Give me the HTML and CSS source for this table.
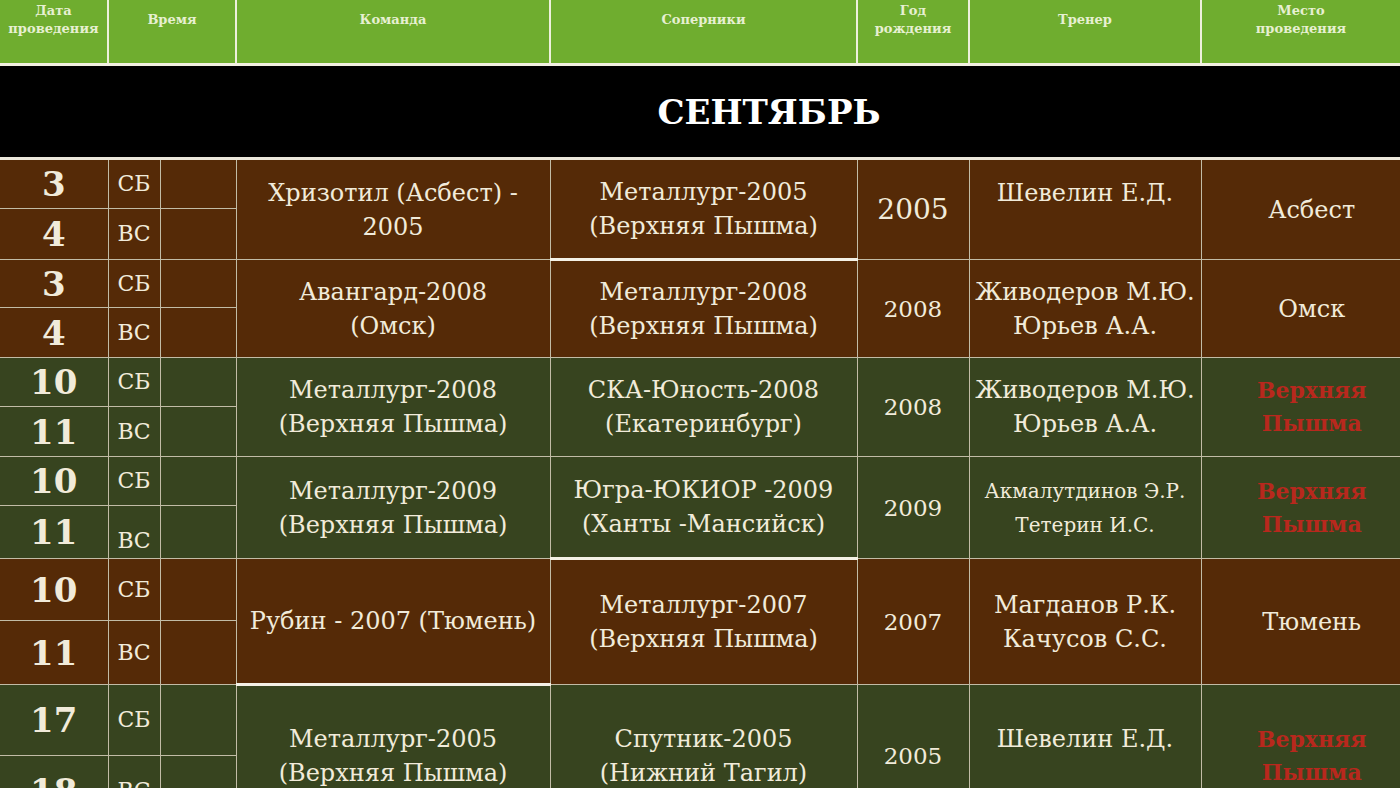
FILE: index.html
```html
<!DOCTYPE html>
<html lang="ru">
<head>
<meta charset="utf-8">
<title>Расписание</title>
<link rel="stylesheet" href="styles.css">
</head>
<body>
<table class="sched">
  <colgroup>
    <col class="c-date"><col class="c-day"><col class="c-time"><col class="c-team"><col class="c-opp"><col class="c-year"><col class="c-coach"><col class="c-place">
  </colgroup>
  <thead>
    <tr class="hdr">
      <th>Дата<br>проведения</th>
      <th colspan="2">Время</th>
      <th>Команда</th>
      <th>Соперники</th>
      <th>Год<br>рождения</th>
      <th>Тренер</th>
      <th>Место<br>проведения</th>
    </tr>
  </thead>
  <tbody>
    <tr class="month"><td colspan="8">СЕНТЯБРЬ</td></tr>

    <tr class="brown r1a">
      <td class="date">3</td><td class="day">СБ</td><td class="time"></td>
      <td class="team" rowspan="2">Хризотил (Асбест) -<br>2005</td>
      <td class="opp thick-b" rowspan="2">Металлург-2005<br>(Верхняя Пышма)</td>
      <td class="year big" rowspan="2">2005</td>
      <td class="coach" rowspan="2">Шевелин Е.Д.<br>&nbsp;</td>
      <td class="place" rowspan="2">Асбест</td>
    </tr>
    <tr class="brown r1b">
      <td class="date">4</td><td class="day">ВС</td><td class="time"></td>
    </tr>

    <tr class="brown r2a">
      <td class="date">3</td><td class="day">СБ</td><td class="time"></td>
      <td class="team" rowspan="2">Авангард-2008<br>(Омск)</td>
      <td class="opp" rowspan="2">Металлург-2008<br>(Верхняя Пышма)</td>
      <td class="year" rowspan="2">2008</td>
      <td class="coach" rowspan="2">Живодеров М.Ю.<br>Юрьев А.А.</td>
      <td class="place" rowspan="2">Омск</td>
    </tr>
    <tr class="brown r2b">
      <td class="date">4</td><td class="day">ВС</td><td class="time"></td>
    </tr>

    <tr class="green r3a">
      <td class="date">10</td><td class="day">СБ</td><td class="time"></td>
      <td class="team" rowspan="2">Металлург-2008<br>(Верхняя Пышма)</td>
      <td class="opp" rowspan="2">СКА-Юность-2008<br>(Екатеринбург)</td>
      <td class="year" rowspan="2">2008</td>
      <td class="coach" rowspan="2">Живодеров М.Ю.<br>Юрьев А.А.</td>
      <td class="place red" rowspan="2">Верхняя<br>Пышма</td>
    </tr>
    <tr class="green r3b">
      <td class="date">11</td><td class="day">ВС</td><td class="time"></td>
    </tr>

    <tr class="green r4a">
      <td class="date">10</td><td class="day">СБ</td><td class="time"></td>
      <td class="team" rowspan="2">Металлург-2009<br>(Верхняя Пышма)</td>
      <td class="opp thick-b" rowspan="2">Югра-ЮКИОР -2009<br>(Ханты -Мансийск)</td>
      <td class="year" rowspan="2">2009</td>
      <td class="coach small" rowspan="2">Акмалутдинов Э.Р.<br>Тетерин И.С.</td>
      <td class="place red" rowspan="2">Верхняя<br>Пышма</td>
    </tr>
    <tr class="green r4b">
      <td class="date">11</td><td class="day low">ВС</td><td class="time"></td>
    </tr>

    <tr class="brown r5a">
      <td class="date">10</td><td class="day">СБ</td><td class="time"></td>
      <td class="team thick-b" rowspan="2">Рубин - 2007 (Тюмень)</td>
      <td class="opp" rowspan="2">Металлург-2007<br>(Верхняя Пышма)</td>
      <td class="year" rowspan="2">2007</td>
      <td class="coach" rowspan="2">Магданов Р.К.<br>Качусов С.С.</td>
      <td class="place" rowspan="2">Тюмень</td>
    </tr>
    <tr class="brown r5b">
      <td class="date">11</td><td class="day">ВС</td><td class="time"></td>
    </tr>

    <tr class="green r6a">
      <td class="date">17</td><td class="day">СБ</td><td class="time"></td>
      <td class="team" rowspan="2">Металлург-2005<br>(Верхняя Пышма)</td>
      <td class="opp" rowspan="2">Спутник-2005<br>(Нижний Тагил)</td>
      <td class="year" rowspan="2">2005</td>
      <td class="coach" rowspan="2">Шевелин Е.Д.<br>&nbsp;</td>
      <td class="place red" rowspan="2">Верхняя<br>Пышма</td>
    </tr>
    <tr class="green r6b">
      <td class="date">18</td><td class="day">ВС</td><td class="time"></td>
    </tr>
  </tbody>
</table>
</body>
</html>
```

FILE: styles.css
```css
html, body {
  margin: 0;
  padding: 0;
  background: #000;
  overflow: hidden;
}
body {
  width: 1400px;
  height: 788px;
  font-family: "DejaVu Serif", "Liberation Serif", serif;
}
.sched {
  width: 1400px;
  table-layout: fixed;
  border-collapse: collapse;
  color: #f1ebda;
}
.c-date { width: 108px; }
.c-day { width: 52px; }
.c-time { width: 76px; }
.c-team { width: 314px; }
.c-opp { width: 307px; }
.c-year { width: 112px; }
.c-coach { width: 232px; }
.c-place { width: 199px; }

.sched th, .sched td {
  padding: 0;
  text-align: center;
  vertical-align: middle;
  overflow: hidden;
  white-space: nowrap;
}

/* header */
.hdr th {
  height: 64px;
  background: #6fad2f;
  color: #e7f0d2;
  font-size: 13px;
  font-weight: bold;
  line-height: 18px;
  vertical-align: middle;
  padding: 2px 0 25px;
  border-left: 2px solid #eef0dc;
  border-right: 2px solid #eef0dc;
  border-bottom: 3px solid #f3f1e2;
  box-sizing: border-box;
}
.hdr th:first-child { border-left: 0; }
.hdr th:last-child { border-right: 0; }

/* month */
.month td {
  height: 91px;
  background: #000;
  color: #fff;
  font-size: 34px;
  font-weight: bold;
  padding-left: 138px;
  border-bottom: 3px solid #ece8dc;
}

/* body cells */
.brown td { background: #552a07; }
.green td { background: #37441f; }
tbody tr:not(.month) td {
  border: 1px solid #c2bca6;
  font-size: 24px;
  line-height: 34px;
}
.sched td:first-child { border-left: 0; }
.sched td.place { border-right: 0; padding-left: 22px; }

.sched td.date {
  font-size: 34px;
  font-weight: bold;
  line-height: 34px;
}
.sched td.day { font-size: 22px; }
.sched td.day.low { vertical-align: bottom; padding-bottom: 0; }
.sched td.year { font-size: 23px; }
.sched td.year.big { font-size: 28px; }
.sched td.coach.small { font-size: 20px; }
.sched td.red {
  color: #b8281d;
  font-weight: bold;
  font-size: 22px;
  line-height: 33px;
}
.sched td.thick-b { border-bottom: 3px solid #f4f1e6; }

.r1a { height: 50px; }
.r1b { height: 51px; }
.r2a { height: 48px; }
.r2b { height: 50px; }
.r3a { height: 49px; }
.r3b { height: 50px; }
.r4a { height: 49px; }
.r4b { height: 53px; }
.r5a { height: 62px; }
.r5b { height: 64px; }
.r6a { height: 71px; }
.r6b { height: 71px; }
```
